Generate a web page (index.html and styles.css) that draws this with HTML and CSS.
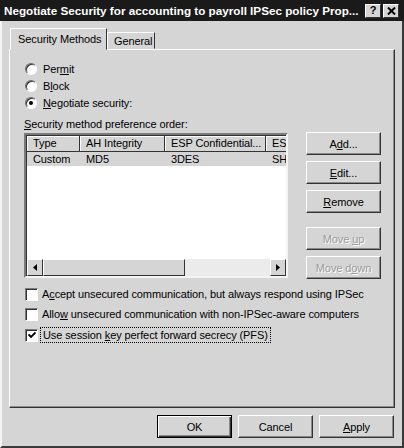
FILE: index.html
```html
<!DOCTYPE html>
<html>
<head>
<meta charset="utf-8">
<link rel="stylesheet" href="styles.css">
</head>
<body>
<div class="window">
  <div class="titlebar">
    <span class="title">Negotiate Security for accounting to payroll IPSec policy Prop...</span>
    <span class="tbtn">?</span>
    <span class="tbtn close">
      <svg width="9" height="8" viewBox="0 0 9 8"><path d="M1 0.5 L8 7.5 M8 0.5 L1 7.5" stroke="#000" stroke-width="2"/></svg>
    </span>
  </div>
  <div class="content">
    <div class="tabs">
      <div class="tab active">Security Methods</div>
      <div class="tab general">General</div>
    </div>
    <div class="panel">
      <div class="radios">
        <div class="radio"><span class="rbox"></span><span>Per<u>m</u>it</span></div>
        <div class="radio"><span class="rbox"></span><span>B<u>l</u>ock</span></div>
        <div class="radio"><span class="rbox on"></span><span><u>N</u>egotiate security:</span></div>
      </div>
      <div class="label"><u>S</u>ecurity method preference order:</div>
      <div class="listrow">
        <div class="listbox">
          <div class="grid">
            <div class="hrow">
              <div class="hc c1">Type</div>
              <div class="hc c2">AH Integrity</div>
              <div class="hc c3">ESP Confidential...</div>
              <div class="hc c4">ES</div>
            </div>
            <div class="row sel">
              <div class="c c1">Custom</div>
              <div class="c c2">MD5</div>
              <div class="c c3">3DES</div>
              <div class="c c4">SH</div>
            </div>
          </div>
          <div class="hscroll">
            <span class="arrow"><svg width="4" height="7" viewBox="0 0 4 7"><path d="M4 0 L0 3.5 L4 7 Z" fill="#000"/></svg></span>
            <span class="track"><span class="thumb"></span></span>
            <span class="arrow"><svg width="4" height="7" viewBox="0 0 4 7"><path d="M0 0 L4 3.5 L0 7 Z" fill="#000"/></svg></span>
          </div>
        </div>
        <div class="sidebtns">
          <div class="btn"><span>A<u>d</u>d...</span></div>
          <div class="btn"><span><u>E</u>dit...</span></div>
          <div class="btn"><span><u>R</u>emove</span></div>
          <div class="btn dis gap"><span>Move <u>u</u>p</span></div>
          <div class="btn dis"><span>Move d<u>o</u>wn</span></div>
        </div>
      </div>
      <div class="checks">
        <div class="check"><span class="cbox"></span><span>A<u>c</u>cept unsecured communication, but always respond using IPSec</span></div>
        <div class="check"><span class="cbox"></span><span>Allo<u>w</u> unsecured communication with non-IPSec-aware computers</span></div>
        <div class="check last"><span class="cbox">
          <svg width="8" height="8" viewBox="0 0 8 8"><path d="M0.5 3.5 L3 6 L7.5 1.5" stroke="#000" stroke-width="1.8" fill="none"/></svg>
        </span><span class="focus">Use session <u>k</u>ey perfect forward secrecy (PFS)</span></div>
      </div>
    </div>
    <div class="footer">
      <div class="btn def"><span>OK</span></div>
      <div class="btn"><span>Cancel</span></div>
      <div class="btn"><span><u>A</u>pply</span></div>
    </div>
  </div>
</div>
</body>
</html>
```
FILE: styles.css
```css
* { box-sizing: border-box; }
html, body { margin: 0; padding: 0; background: #d5d5d5; }
body {
  font-family: "Liberation Sans", Arial, sans-serif;
  font-size: 11px;
  letter-spacing: -0.1px;
  color: #000;
}
u { text-decoration: underline; text-underline-offset: 1px; }
.window {
  width: 404px;
  height: 448px;
  background: #d5d5d5;
  border-left: 2px solid #f4f4f4;
  border-right: 2px solid #3a3a3a;
  border-bottom: 2px solid #3a3a3a;
  display: flex;
  flex-direction: column;
}
.titlebar {
  height: 21px;
  background: #1a1a1a;
  display: flex;
  align-items: center;
  padding: 0 5px 0 4px;
  margin-left: -2px;
  margin-right: -2px;
}
.title {
  flex: 1;
  color: #fff;
  font-weight: bold;
  font-size: 11.7px;
  letter-spacing: 0;
  white-space: nowrap;
  overflow: hidden;
}
.tbtn {
  flex: none;
  width: 16px;
  height: 14px;
  margin-left: 2px;
  background: #d5d5d5;
  border: 1px solid;
  border-color: #fff #333 #333 #fff;
  display: flex;
  align-items: center;
  justify-content: center;
  font-weight: bold;
  font-size: 11px;
  line-height: 1;
}
.content {
  flex: 1;
  display: flex;
  flex-direction: column;
  padding: 7px 7px 0 7px;
}
.tabs {
  display: flex;
  align-items: flex-end;
  height: 21px;
  position: relative;
  z-index: 1;
}
.tab {
  height: 17px;
  padding: 2px 0 0 6px;
  border: 1px solid;
  border-color: #fff #333 transparent #fff;
  background: #d5d5d5;
  white-space: nowrap;
}
.tab.general { width: 48px; }
.tab.active {
  width: 97px;
  height: 22px;
  padding: 4px 0 0 7px;
  margin-bottom: -1px;
  margin-left: 1px;
  border-top-color: #fff;
}
.panel {
  height: 359px;
  border: 1px solid;
  border-color: #fff #333 #333 #fff;
  box-shadow: inset -1px -1px 0 #8a8a8a;
  padding: 12px 14px 0 14px;
  display: flex;
  flex-direction: column;
}
.radios { display: flex; flex-direction: column; gap: 3px; }
.radio, .check { display: flex; align-items: center; height: 14px; white-space: nowrap; }
.rbox {
  flex: none;
  width: 12px; height: 12px;
  border-radius: 50%;
  background: #fff;
  border: 1px solid;
  border-color: #6a6a6a #fff #fff #6a6a6a;
  box-shadow: inset 1px 1px 0 #333;
  margin-right: 6px;
  margin-left: 1px;
  display: flex; align-items: center; justify-content: center;
}
.rbox.on::after {
  content: "";
  width: 4px; height: 4px; border-radius: 50%; background: #000;
}
.label { margin-top: 8px; height: 14px; }
.listrow { display: flex; margin-top: 1px; }
.listbox {
  flex: none;
  width: 264px;
  height: 145px;
  background: #fff;
  border: 2px solid;
  border-color: #7a7a7a #f4f4f4 #f4f4f4 #7a7a7a;
  box-shadow: inset 1px 1px 0 #333;
  display: flex;
  flex-direction: column;
  padding: 1px 0 0 1px;
}
.grid { flex: 1; overflow: hidden; }
.hrow, .row { display: flex; white-space: nowrap; }
.hrow { height: 16px; }
.hc {
  background: #d5d5d5;
  border-right: 1px solid #333;
  border-bottom: 1px solid #333;
  box-shadow: inset 1px 1px 0 #fff;
  padding: 0 0 0 6px;
  line-height: 15px;
  overflow: hidden;
}
.c { line-height: 14px; padding-left: 6px; overflow: hidden; }
.row { height: 14px; }
.row.sel { background: #d5d5d5; }
.c1 { width: 53px; flex: none; }
.c2 { width: 85px; flex: none; }
.c3 { width: 101px; flex: none; }
.c4 { width: 30px; flex: none; }
.hscroll { height: 17px; display: flex; }
.arrow {
  flex: none;
  width: 16px; height: 17px;
  background: #d5d5d5;
  border: 1px solid;
  border-color: #fff #333 #333 #fff;
  display: flex; align-items: center; justify-content: center;
}
.track { flex: 1; background: #ebebeb; display: flex; }
.thumb {
  width: 142px; height: 17px;
  background: #d5d5d5;
  border: 1px solid;
  border-color: #fff #333 #333 #fff;
}
.sidebtns {
  margin-left: 18px;
  margin-top: -1px;
  display: flex;
  flex-direction: column;
  gap: 6px;
}
.btn {
  flex: none;
  width: 75px;
  height: 23px;
  background: #d5d5d5;
  border: 1px solid;
  border-color: #fff #333 #333 #fff;
  box-shadow: inset -1px -1px 0 #8a8a8a;
  display: flex; align-items: center; justify-content: center;
  white-space: nowrap;
}
.btn.gap { margin-top: 8px; }
.btn.dis { color: #9a9a9a; text-shadow: 1px 1px 0 #fff; }
.checks { margin-top: 8px; display: flex; flex-direction: column; gap: 6px; }
.check.last { margin-top: 1px; }
.cbox {
  flex: none;
  width: 13px; height: 13px;
  background: #fff;
  border: 1px solid;
  border-color: #7a7a7a #fff #fff #7a7a7a;
  box-shadow: inset 1px 1px 0 #333;
  margin-right: 4px;
  margin-left: 1px;
  display: flex; align-items: center; justify-content: center;
}
.focus { outline: 1px dotted #000; outline-offset: 1px; padding: 0 1px; }
.footer {
  display: flex;
  justify-content: flex-end;
  gap: 6px;
  padding: 7px 1px 0 0;
}
.footer .btn { width: 75px; height: 23px; }
.btn.def { border: 1px solid #000; box-shadow: inset 1px 1px 0 #fff, inset -1px -1px 0 #333, inset -2px -2px 0 #8a8a8a; }
```
